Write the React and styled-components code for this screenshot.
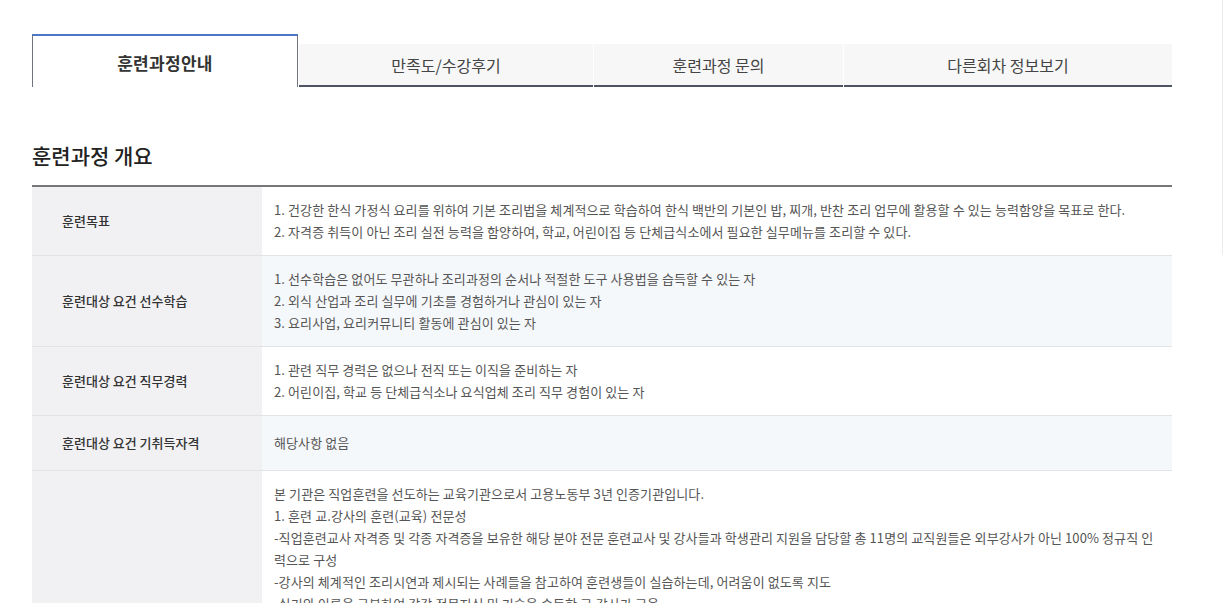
import React from 'react';
import styled, { createGlobalStyle } from 'styled-components';

const GlobalStyle = createGlobalStyle`
  html, body {
    margin: 0;
    padding: 0;
    overflow: hidden;
    background: #fff;
  }
  body {
    font-family: "Noto Sans CJK KR", "Noto Sans", sans-serif;
    color: #333;
  }
`;

const tabs = [
  { label: '훈련과정안내', width: 266, active: true },
  { label: '만족도/수강후기', width: 294 },
  { label: '훈련과정 문의', width: 249 },
  { label: '다른회차 정보보기', width: 328 },
];

const rows = [
  {
    title: '훈련목표',
    lines: [
      '1. 건강한 한식 가정식 요리를 위하여 기본 조리법을 체계적으로 학습하여 한식 백반의 기본인 밥, 찌개, 반찬 조리 업무에 활용할 수 있는 능력함양을 목표로 한다.',
      '2. 자격증 취득이 아닌 조리 실전 능력을 함양하여, 학교, 어린이집 등 단체급식소에서 필요한 실무메뉴를 조리할 수 있다.',
    ],
  },
  {
    title: '훈련대상 요건 선수학습',
    tint: true,
    lines: [
      '1. 선수학습은 없어도 무관하나 조리과정의 순서나 적절한 도구 사용법을 습득할 수 있는 자',
      '2. 외식 산업과 조리 실무에 기초를 경험하거나 관심이 있는 자',
      '3. 요리사업, 요리커뮤니티 활동에 관심이 있는 자',
    ],
  },
  {
    title: '훈련대상 요건 직무경력',
    lines: [
      '1. 관련 직무 경력은 없으나 전직 또는 이직을 준비하는 자',
      '2. 어린이집, 학교 등 단체급식소나 요식업체 조리 직무 경험이 있는 자',
    ],
  },
  {
    title: '훈련대상 요건 기취득자격',
    tint: true,
    lines: ['해당사항 없음'],
  },
  {
    title: '훈련기관 강점',
    lines: [
      '본 기관은 직업훈련을 선도하는 교육기관으로서 고용노동부 3년 인증기관입니다.',
      '1. 훈련 교.강사의 훈련(교육) 전문성',
      '-직업훈련교사 자격증 및 각종 자격증을 보유한 해당 분야 전문 훈련교사 및 강사들과 학생관리 지원을 담당할 총 11명의 교직원들은 외부강사가 아닌 100% 정규직 인력으로 구성',
      '-강사의 체계적인 조리시연과 제시되는 사례들을 참고하여 훈련생들이 실습하는데, 어려움이 없도록 지도',
      '-실기와 이론을 구분하여 각각 전문지식 및 기술을 습득한 교.강사가 교육',
      '2. 훈련시설 및 장비',
      '-실습실 내 개인별 조리대와 조리도구를 구비하여 1인 1실습이 가능한 환경',
      '-최신 조리장비와 위생설비를 갖추어 현장과 동일한 실습 환경 제공',
      '3. 취업지원',
      '-전담 취업지원 담당자를 통한 개인별 취업상담 및 이력서 작성 지도',
      '-협약 기업 및 단체급식소와 연계한 취업 알선',
      '-수료 후에도 지속적인 사후관리 진행',
    ],
  },
];

const App = () => {
  return (
    <>
      <GlobalStyle />
      <EdgeLine />
      <Page>
        <TabBar>
          {tabs.map((t) => (
            <Tab key={t.label} $active={t.active} $width={t.width}>
              {t.label}
            </Tab>
          ))}
        </TabBar>

        <Heading>훈련과정 개요</Heading>

        <InfoTable>
          <tbody>
            {rows.map((r) => (
              <tr key={r.title}>
                <Th>{r.title}</Th>
                <Td $tint={r.tint}>
                  {r.lines.map((line) => (
                    <Line key={line}>{line}</Line>
                  ))}
                </Td>
              </tr>
            ))}
          </tbody>
        </InfoTable>
      </Page>
    </>
  );
};

export default App;

const Page = styled.div`
  width: 1140px;
  padding: 34px 0 0 32px;
`;

const TabBar = styled.div`
  display: flex;
  align-items: flex-end;
  gap: 1px;
  height: 53px;
`;

const Tab = styled.div`
  box-sizing: border-box;
  width: ${(p) => p.$width}px;
  display: flex;
  align-items: center;
  justify-content: center;
  ${(p) =>
    p.$active
      ? `
    height: 53px;
    background: #fff;
    border-top: 2px solid #4a76c8;
    border-left: 1px solid #6f737b;
    border-right: 1px solid #6f737b;
    font-size: 17px;
    font-weight: 700;
    letter-spacing: 0.3px;
    color: #333;
    padding-top: 2px;
  `
      : `
    height: 43px;
    background: #f7f7f7;
    border-bottom: 2px solid #4e5463;
    font-size: 16px;
    font-weight: 400;
    letter-spacing: 0;
    color: #444;
  `}
`;

const Heading = styled.h2`
  margin: 53px 0 15px;
  font-size: 21px;
  font-weight: 500;
  line-height: 30px;
  color: #222;
  letter-spacing: 0;
`;

const InfoTable = styled.table`
  width: 1140px;
  border-collapse: collapse;
  border-top: 2px solid #777;
  table-layout: fixed;
`;

const Th = styled.th`
  width: 230px;
  box-sizing: border-box;
  padding: 16px 0 16px 30px;
  background: #f1f1f3;
  text-align: left;
  font-size: 13px;
  font-weight: 500;
  line-height: 22px;
  color: #333;
  letter-spacing: 0;
  border-bottom: 1px solid #e1e3e6;
  vertical-align: middle;
`;

const Td = styled.td`
  padding: 12px 14px 12px 12px;
  background: ${(p) => (p.$tint ? '#f5f8fb' : '#fff')};
  font-size: 13px;
  line-height: 22px;
  color: #555;
  letter-spacing: 0.1px;
  border-bottom: 1px solid #e1e3e6;
  vertical-align: middle;
`;

const Line = styled.div`
  word-break: normal;
  line-break: anywhere;
`;

const EdgeLine = styled.div`
  position: fixed;
  top: 0;
  left: 1222px;
  width: 1px;
  height: 255px;
  background: #ececec;
`;
